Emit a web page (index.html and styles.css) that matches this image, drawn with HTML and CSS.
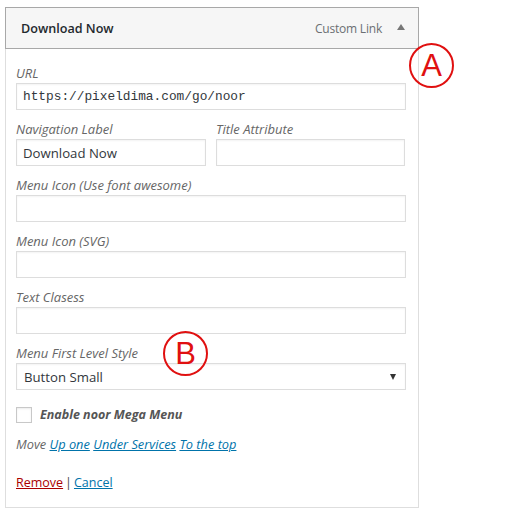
FILE: index.html
```html
<!DOCTYPE html>
<html>
<head>
<meta charset="utf-8">
<link rel="stylesheet" href="styles.css">
</head>
<body>
<div class="page">
  <div class="item">
    <div class="handle">
      <span class="title">Download Now</span>
      <span class="controls"><span class="type">Custom Link</span><span class="arrow"></span></span>
    </div>
    <div class="settings">
      <div class="field">
        <label class="lbl">URL</label>
        <div class="input mono">https://pixeldima.com/go/noor</div>
      </div>
      <div class="row">
        <div class="field">
          <label class="lbl">Navigation Label</label>
          <div class="input">Download Now</div>
        </div>
        <div class="field">
          <label class="lbl">Title Attribute</label>
          <div class="input"></div>
        </div>
      </div>
      <div class="field">
        <label class="lbl">Menu Icon (Use font awesome)</label>
        <div class="input"></div>
      </div>
      <div class="field">
        <label class="lbl">Menu Icon (SVG)</label>
        <div class="input"></div>
      </div>
      <div class="field">
        <label class="lbl">Text Clasess</label>
        <div class="input"></div>
      </div>
      <div class="field">
        <label class="lbl">Menu First Level Style</label>
        <div class="input select"><span>Button Small</span><span class="caret"></span></div>
      </div>
      <div class="check">
        <span class="box"></span>
        <span class="check-label">Enable noor Mega Menu</span>
      </div>
      <div class="move">Move <a href="#">Up one</a> <a href="#">Under Services</a> <a href="#">To the top</a></div>
      <div class="actions"><a href="#" class="remove">Remove</a><span class="sep">|</span><a href="#" class="cancel">Cancel</a></div>
    </div>
    <div class="mark mark-a">A</div>
    <div class="mark mark-b">B</div>
  </div>
</div>
</body>
</html>
```
FILE: styles.css
```css
html, body {
  margin: 0;
  padding: 0;
  background: #fff;
}
body {
  font-family: "Open Sans", "Noto Sans", sans-serif;
  color: #333;
}
.page {
  padding: 7px 0 0 5px;
}
.item {
  position: relative;
  width: 414px;
}
.handle {
  box-sizing: border-box;
  height: 42px;
  border: 1px solid #a8a8a8;
  background: #f6f6f6;
  display: flex;
  align-items: center;
  justify-content: space-between;
  padding: 0 13px 0 15px;
}
.title {
  font-size: 12.6px;
  font-weight: 600;
  color: #23282d;
}
.controls {
  display: flex;
  align-items: center;
}
.type {
  font-size: 12px;
  letter-spacing: -0.2px;
  color: #6b6f73;
}
.arrow {
  width: 0;
  height: 0;
  border-left: 4px solid transparent;
  border-right: 4px solid transparent;
  border-bottom: 6px solid #777;
  margin-left: 15px;
  margin-top: -2px;
}
.settings {
  box-sizing: border-box;
  border: 1px solid #dedede;
  border-top: none;
  padding: 16px 12px 16px 10px;
}
.field {
  display: flex;
  flex-direction: column;
  margin-bottom: 11px;
}
.lbl {
  font-size: 13px;
  font-style: italic;
  color: #666;
  line-height: 17px;
  margin-bottom: 1px;
}
.input {
  box-sizing: border-box;
  height: 27px;
  border: 1px solid #ddd;
  box-shadow: inset 0 1px 2px rgba(0,0,0,0.05);
  font-size: 13.2px;
  color: #32373c;
  padding: 0 6px;
  display: flex;
  align-items: center;
}
.mono {
  font-family: "Liberation Mono", monospace;
  font-size: 12.8px;
}
.row {
  display: grid;
  grid-template-columns: 190px 189px;
  column-gap: 10px;
}
.select {
  justify-content: space-between;
  padding: 0 9px 0 7px;
}
.caret {
  width: 0;
  height: 0;
  border-left: 3px solid transparent;
  border-right: 3px solid transparent;
  border-top: 6px solid #333;
}
.check {
  display: flex;
  align-items: center;
  margin-top: 16px;
}
.box {
  box-sizing: border-box;
  width: 16px;
  height: 16px;
  border: 1px solid #c8c8c8;
  box-shadow: inset 0 1px 2px rgba(0,0,0,0.08);
  margin-right: 8px;
}
.check-label {
  font-size: 12.5px;
  font-weight: 700;
  font-style: italic;
  color: #555;
}
.move {
  margin-top: 12px;
  font-size: 12.8px;
  font-style: italic;
  color: #666;
}
.move a {
  color: #0073aa;
}
.actions {
  margin-top: 21px;
  font-size: 12.5px;
  color: #444;
}
.sep {
  margin: 0 2px;
}
.remove {
  color: #a00;
}
.cancel {
  color: #0073aa;
}
.mark {
  position: absolute;
  box-sizing: border-box;
  width: 45px;
  height: 45px;
  border: 2px solid #e01010;
  border-radius: 50%;
  color: #e01010;
  font-family: "Liberation Sans", Arial, sans-serif;
  font-size: 31px;
  line-height: 41px;
  text-align: center;
}
.mark-a {
  left: 404px;
  top: 36px;
}
.mark-b {
  left: 158px;
  top: 324px;
}
```
